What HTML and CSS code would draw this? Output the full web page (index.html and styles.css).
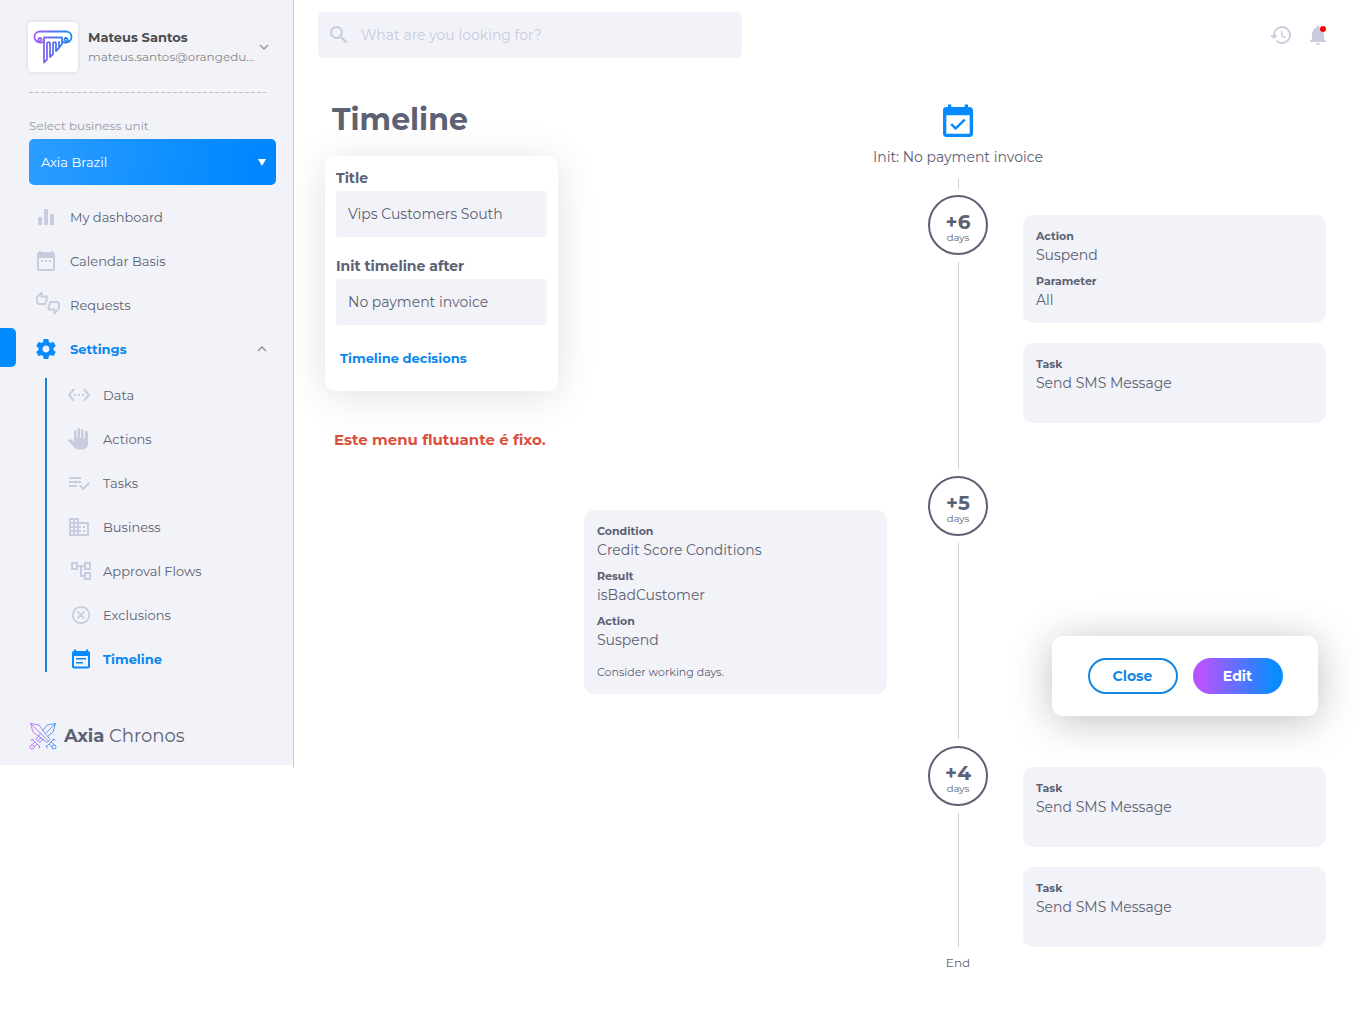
FILE: index.html
```html
<!DOCTYPE html>
<html lang="en">
<head>
<meta charset="utf-8">
<meta name="viewport" content="width=device-width, initial-scale=1">
<title>Axia Chronos – Timeline</title>
<link rel="stylesheet" href="styles.css">
</head>
<body>
<div class="app">
  <aside class="sidebar">
    <div class="sidebar-inner">
      <div class="user">
        <span class="avatar">
          <svg width="40" height="34" viewBox="0 0 40 34" fill="none" stroke="url(#brand)" stroke-width="1.800" stroke-linecap="round" stroke-linejoin="round">
            <defs>
              <linearGradient id="brand" gradientUnits="userSpaceOnUse" x1="0" y1="0" x2="40" y2="0"><stop offset="0" stop-color="#b455f5"/><stop offset="1" stop-color="#0a8cf0"/></linearGradient>
            </defs>
            <path d="M11 9.500C11 12 9 13 7 12.500C3 12 1.500 9 1.500 6.500C1.500 3.500 4 1.500 7 1.500H33C36 1.500 38.500 3.500 38.500 6.500C38.500 9 37 12 33 12.500C31 13 29 12 29 9.500M7.500 12.500C4.500 11 5 8 7 8C8.500 8 9 9.500 8 10.500M32.500 12.500C35.500 11 35 8 33 8C31.500 8 31 9.500 32 10.500M11 7.500H29M11 8V32.500L14 29.500V14C14 11.500 17 11.500 17 14V27L20 24V14C20 11.500 23 11.500 23 14V21L26 18V14M26 12V18L29 14V8"/>
          </svg>
        </span>
        <div class="user-text">
          <strong class="user-name">Mateus Santos</strong>
          <span class="user-mail">mateus.santos@orangedu...</span>
        </div>
        <button class="icon-button" type="button" aria-label="Open account menu">
          <svg width="10" height="6" viewBox="0 0 10 6" fill="none" stroke="#999" stroke-width="1.500"><path d="M1 1l4 4 4-4"/></svg>
        </button>
      </div>
      <svg class="divider" height="1" aria-hidden="true"><line x1="0" y1=".5" x2="100%" y2=".5" stroke="#bfc1cb" stroke-dasharray="4 2"/></svg>

      <div class="unit">
        <label for="unit">Select business unit</label>
        <div class="unit-box">
          <select id="unit"><option>Axia Brazil</option></select>
          <svg width="8" height="7" viewBox="0 0 8 7" fill="#fff" aria-hidden="true"><path d="M0 0h8L4 7z"/></svg>
        </div>
      </div>

      <nav class="nav">
        <a class="nav-item" href="#dashboard"><svg class="icon" viewBox="0 0 24 24"><path d="M4 12h4v8H4zM10 4h4v16h-4zM16 9h4v11h-4z"/></svg>My dashboard</a>
        <a class="nav-item" href="#calendar"><svg class="icon" viewBox="0 0 24 24"><path d="M5 3V2h2v1h10V2h2v1c1.200 0 2 .8 2 2v15c0 1.200-.8 2-2 2H5c-1.200 0-2-.8-2-2V5c0-1.200.8-2 2-2zm0 6v11h14V9zM7 11h2v2H7zm4 0h2v2h-2zm4 0h2v2h-2z"/></svg>Calendar Basis</a>
        <a class="nav-item" href="#requests"><svg class="icon" viewBox="0 0 24 24" overflow="visible"><path transform="translate(1 -2)" fill="none" stroke="#c9cbdf" stroke-width="1.800" d="M2 6L6.500 1.800L7 2.300L6.400 5.500H12V7L10.300 13H3.500L2 11.500zM24 17.500L19.500 22.500L19 21.500L19.500 18.500H13.500V16.500L15.500 11H22.500L24 12.500z"/></svg>Requests</a>
        <a class="nav-item active marked" href="#settings"><svg class="icon" viewBox="0 0 24 24"><path d="M19.430 12.980c.04-.32.07-.64.07-.98s-.03-.66-.07-.98l2.110-1.650c.19-.15.24-.42.12-.64l-2-3.460c-.12-.22-.39-.3-.61-.22l-2.490 1c-.52-.4-1.080-.73-1.690-.98l-.38-2.650A.488.488 0 0 0 14 2h-4c-.25 0-.46.18-.49.42l-.38 2.650c-.61.25-1.170.59-1.690.98l-2.490-1c-.23-.09-.49 0-.61.22l-2 3.460c-.13.22-.07.49.12.64l2.110 1.650c-.04.32-.07.65-.07.98s.03.66.07.98l-2.110 1.650c-.19.15-.24.42-.12.64l2 3.460c.12.22.39.3.61.22l2.490-1c.52.4 1.080.73 1.690.98l.38 2.650c.03.24.24.42.49.42h4c.25 0 .46-.18.49-.42l.38-2.650c.61-.25 1.170-.59 1.690-.98l2.490 1c.23.09.49 0 .61-.22l2-3.460c.12-.22.07-.49-.12-.64zM12 15.500c-1.930 0-3.500-1.570-3.500-3.500s1.570-3.500 3.500-3.500 3.500 1.570 3.500 3.500-1.570 3.500-3.500 3.500z"/></svg>Settings<svg class="caret" width="10" height="6" viewBox="0 0 10 6" fill="none" stroke="#999" stroke-width="1.500"><path d="M1 5l4-4 4 4"/></svg></a>
        <div class="subnav">
          <a class="nav-item" href="#data"><svg class="icon" viewBox="0 0 24 24"><path d="M7.770 6.760L6.230 5.480.82 12l5.410 6.520 1.540-1.280L3.420 12zM7 13h2v-2H7zm10-2h-2v2h2zm-6 2h2v-2h-2zm6.770-7.520l-1.540 1.280L20.580 12l-4.350 5.240 1.540 1.280L23.180 12z"/></svg>Data</a>
          <a class="nav-item" href="#actions"><svg class="icon" viewBox="0 0 24 24"><path d="M21 5.500v11c0 3.500-2.500 6-6 6h-3c-2 0-3.500-.7-4.800-2L1 13.200c1.500-1.300 2.700-1 4-.2l2 1.400V4.500C7 2.700 9.500 2.700 9.500 4.500V11h1V2.500c0-1.900 2.500-1.900 2.500 0V11h1V3.500c0-1.900 2.500-1.900 2.500 0V11h1.500V5.500c0-1.900 3-1.900 3 0z"/></svg>Actions</a>
          <a class="nav-item" href="#tasks"><svg class="icon" viewBox="0 0 24 24"><path d="M2 6h12v2H2zM2 10h12v2H2zM2 14h8v2H2zM13.400 13.600L12 15l4.250 4.250L23 12.500l-1.400-1.400-5.350 5.300z"/></svg>Tasks</a>
          <a class="nav-item" href="#business"><svg class="icon" viewBox="0 0 24 24"><path d="M12 7V3H2v18h20V7zM6 19H4v-2h2zm0-4H4v-2h2zm0-4H4V9h2zm0-4H4V5h2zm4 12H8v-2h2zm0-4H8v-2h2zm0-4H8V9h2zm0-4H8V5h2zm10 12h-8v-2h2v-2h-2v-2h2v-2h-2V9h8zm-2-8h-2v2h2zm0 4h-2v2h2z"/></svg>Business</a>
          <a class="nav-item" href="#flows"><svg class="icon" viewBox="-2 0 24 24"><path d="M22 11V3h-7v3H9V3H2v8h7V8h2v10h4v3h7v-8h-7v3h-2V8h2v3zM7 9H4V5h3zm10 6h3v4h-3zm0-10h3v4h-3z"/></svg>Approval Flows</a>
          <a class="nav-item" href="#exclusions"><svg class="icon" viewBox="-2 0 24 24"><path fill="none" stroke="#c9cbdf" stroke-width="1.700" d="M12 3.800a8.200 8.200 0 1 0 0 16.400 8.200 8.200 0 0 0 0-16.400zM8.500 8.500l7 7m0-7l-7 7"/></svg>Exclusions</a>
          <a class="nav-item active" href="#timeline"><svg class="icon" viewBox="-2 0 24 24"><path d="M5 4V2.500h2V4h10V2.500h2V4c1.200 0 2 .8 2 2v13.500c0 1.200-.8 2-2 2H5c-1.200 0-2-.8-2-2V6c0-1.200.8-2 2-2zm0 5v10.500h14V9zM7 11h10v1.600H7zm0 4h7v1.600H7z"/></svg>Timeline</a>
        </div>
      </nav>

      <div class="brand">
        <svg width="28" height="28" viewBox="0 0 28 28" fill="none" stroke="url(#swords)" stroke-width=".8" stroke-linejoin="round">
          <defs><linearGradient id="swords" gradientUnits="userSpaceOnUse" x1="0" y1="0" x2="28" y2="0"><stop offset="0" stop-color="#c35af5"/><stop offset="1" stop-color="#168cf0"/></linearGradient></defs>
          <path d="M1.500 1.500L10 3L21 17.500L18 20.500L4 10zM1.500 1.500L19 18.500M26.500 1.500L18 3L13.500 9M26.500 1.500L24 10L18.500 14.500M11.500 11.500L7 17.500L10 20.500L15 17M26.500 1.500L17 11M12 16L9 18.500M3 17L11 25M1.500 18.500L3 17L5 18.500M9.500 23L11 25L9.500 26.500M6 20L2.500 23M8 22L5 25.500M25 17L17 25M26.500 18.500L25 17L23 18.500M18.500 23L17 25L18.500 26.500M22 20L25.500 23M20 22L23 25.500"/>
          <circle cx="3" cy="25" r="2"/><circle cx="25" cy="25" r="2"/>
        </svg>
        <span><strong>Axia</strong> Chronos</span>
      </div>
    </div>
  </aside>

  <main class="main">
    <header class="topbar">
      <label class="search">
        <svg class="icon" viewBox="0 0 24 24"><path d="M15.500 14h-.79l-.28-.27A6.471 6.471 0 0 0 16 9.500 6.500 6.500 0 1 0 9.500 16c1.610 0 3.090-.59 4.230-1.570l.27.28v.79l5 4.990L20.490 19zm-6 0C7.010 14 5 11.990 5 9.500S7.010 5 9.500 5 14 7.010 14 9.500 11.990 14 9.500 14z"/></svg>
        <input type="search" placeholder="What are you looking for?" aria-label="Search">
      </label>
      <div class="tools">
        <button class="icon-button" type="button" aria-label="History"><svg class="icon" viewBox="0 0 24 24"><path d="M13 3a9 9 0 0 0-9 9H1l3.890 3.890.07.14L9 12H6c0-3.870 3.130-7 7-7s7 3.130 7 7-3.130 7-7 7c-1.930 0-3.680-.79-4.940-2.060l-1.420 1.420A8.954 8.954 0 0 0 13 21a9 9 0 0 0 0-18zm-1 5v5l4.280 2.540.72-1.210-3.500-2.080V8z"/></svg></button>
        <button class="icon-button bell" type="button" aria-label="Notifications"><svg class="icon" viewBox="0 0 24 24"><path d="M12 22c1.100 0 2-.9 2-2h-4c0 1.100.9 2 2 2zm6-6v-5c0-3.070-1.640-5.640-4.500-6.320V4c0-.83-.67-1.500-1.500-1.500s-1.500.67-1.500 1.500v.68C7.630 5.360 6 7.920 6 11v5l-2 2v1h16v-1z"/></svg></button>
      </div>
    </header>

    <div class="content">
      <section class="panel">
        <h1>Timeline</h1>
        <form class="panel-card">
          <label for="title">Title</label>
          <input id="title" type="text" value="Vips Customers South">
          <label for="init">Init timeline after</label>
          <input id="init" type="text" value="No payment invoice">
          <a href="#decisions">Timeline decisions</a>
        </form>
        <p class="note">Este menu flutuante é fixo.</p>
      </section>

      <section class="timeline">
        <div class="start">
          <svg width="40" height="40" viewBox="0 0 24 24" fill="#068bff"><path d="M16.530 11.060L15.470 10l-4.880 4.880-2.120-2.120-1.060 1.060L10.590 17zM19 3h-1V1.500h-2V3H8V1.500H6V3H5a2 2 0 0 0-2 2v14c0 1.100.9 2 2 2h14c1.100 0 2-.9 2-2V5c0-1.100-.9-2-2-2zm0 16H5V8h14z"/></svg>
          <span>Init: No payment invoice</span>
          <i class="stem"></i>
        </div>

        <div class="step">
          <div class="node"><div class="circle"><strong>+6</strong><span>days</span></div></div>
          <div class="after">
            <dl class="card"><dt>Action</dt><dd>Suspend</dd><dt>Parameter</dt><dd>All</dd></dl>
            <dl class="card"><dt>Task</dt><dd>Send SMS Message</dd></dl>
          </div>
        </div>

        <div class="step">
          <div class="before">
            <div class="card">
              <dl><dt>Condition</dt><dd>Credit Score Conditions</dd><dt>Result</dt><dd>isBadCustomer</dd><dt>Action</dt><dd>Suspend</dd></dl>
              <p>Consider working days.</p>
            </div>
          </div>
          <div class="node"><div class="circle"><strong>+5</strong><span>days</span></div></div>
          <div class="after end">
            <div class="actions">
              <button class="pill outline" type="button">Close</button>
              <button class="pill filled" type="button">Edit</button>
            </div>
          </div>
        </div>

        <div class="step last">
          <div class="node"><div class="circle"><strong>+4</strong><span>days</span></div></div>
          <div class="after">
            <dl class="card"><dt>Task</dt><dd>Send SMS Message</dd></dl>
            <dl class="card"><dt>Task</dt><dd>Send SMS Message</dd></dl>
          </div>
        </div>
        <div class="finish"><span>End</span></div>
      </section>
    </div>
  </main>
</div>
</body>
</html>
```
FILE: styles.css
```css
* { box-sizing: border-box; }

body {
  margin: 0;
  background: #fff;
  color: #5c6173;
  font-family: Montserrat, Inter, "Open Sans", sans-serif;
  font-size: 14px;
  font-weight: 400;
  line-height: 18px;
}

a { text-decoration: none; }
input, select, button { font: inherit; color: inherit; border: 0; }
svg { flex: none; }
strong { font-weight: 700; }
dl, dd, p, h1 { margin: 0; }

.icon { width: 24px; height: 24px; fill: #c9cbdf; }
.icon-button { display: flex; padding: 0; background: none; }

.app { display: flex; align-items: flex-start; min-height: 100vh; }

/* Sidebar */
.sidebar {
  flex: none;
  width: 294px;
  padding-bottom: 3px;
  border-right: 1px solid #c8cad6;
}
.sidebar-inner { padding: 22px 0 13px; background: #f2f3f8; }

.user { display: flex; align-items: center; gap: 10px; padding: 0 24px 0 28px; }
.avatar {
  display: grid;
  place-items: center;
  flex: none;
  width: 50px;
  height: 50px;
  border-radius: 4px;
  background: #fff;
  box-shadow: 0 0 4px rgba(0, 0, 0, .12);
}
.user-text { display: flex; flex: 1; flex-direction: column; gap: 2px; min-width: 0; white-space: nowrap; }
.user-name { color: #4d4d4d; font-size: 13px; }
.user-mail { color: #858585; font-size: 12px; }
.divider { display: block; width: 237px; margin: 20px 0 24px 29px; }

.unit { display: flex; flex-direction: column; gap: 4px; padding: 0 17px 0 29px; }
.unit label { color: #9799a6; font-size: 12px; }
.unit-box { display: grid; align-items: center; }
.unit-box > * { grid-area: 1 / 1; }
.unit-box svg { justify-self: end; margin-right: 10px; pointer-events: none; }
.unit select {
  width: 100%;
  height: 46px;
  padding: 0 12px;
  appearance: none;
  border-radius: 5px;
  background: linear-gradient(100deg, #2c9dff, #0087ff 90%);
  color: #fff;
  font-size: 13px;
}

.nav { margin-top: 10px; }
.nav-item {
  display: flex;
  align-items: center;
  gap: 12px;
  height: 44px;
  padding: 0 26px 0 34px;
  color: #5c6173;
  font-size: 13px;
}
.active { color: #0a88f0; font-weight: 700; }
.active .icon { fill: #068bff; }
.caret { margin-left: auto; }
.marked { position: relative; }
.marked::before {
  position: absolute;
  top: 1px;
  left: 0;
  width: 16px;
  height: 39px;
  border-radius: 0 5px 5px 0;
  background: #008cff;
  content: "";
}
.subnav { position: relative; padding-top: 2px; }
.subnav::before {
  position: absolute;
  top: 7px;
  bottom: 9px;
  left: 45px;
  width: 2px;
  background: #1a82d2;
  content: "";
}
.subnav .nav-item { padding-left: 67px; }

.brand {
  display: flex;
  align-items: center;
  gap: 7px;
  height: 32px;
  margin-top: 39px;
  padding-left: 29px;
  font-size: 18px;
}

/* Main area */
.main { flex: 1; min-width: 0; padding: 12px 40px 48px 24px; }
.topbar { display: flex; align-items: center; justify-content: space-between; gap: 24px; }
.search {
  display: flex;
  align-items: center;
  gap: 10px;
  width: 424px;
  height: 46px;
  padding: 0 9px;
  border-radius: 5px;
  background: #f2f3f8;
}
.search input { flex: 1; min-width: 0; padding: 0; background: none; outline: 0; }
.search input::placeholder { color: #c9cbdf; opacity: 1; }
.tools { display: flex; gap: 13px; margin-right: -4px; }
.bell { position: relative; }
.bell::after {
  position: absolute;
  top: 3px;
  right: 4px;
  width: 6px;
  height: 6px;
  border-radius: 50%;
  background: #f00;
  content: "";
}

.content { display: flex; align-items: flex-start; gap: 26px; padding: 42px 0 0 7px; }

.panel { flex: none; width: 233px; }
.panel h1 { padding-left: 7px; font-size: 30px; font-weight: 700; line-height: 40px; }
.panel-card {
  display: flex;
  flex-direction: column;
  margin-top: 16px;
  padding: 13px 11px 24px;
  border-radius: 10px;
  background: #fff;
  box-shadow: 0 5px 40px rgba(0, 0, 0, .12);
}
.panel-card label { margin-bottom: 4px; font-weight: 700; }
.panel-card input {
  height: 46px;
  margin-bottom: 20px;
  padding: 0 12px;
  border-radius: 4px;
  background: #f2f3f8;
}
.panel-card a { margin-top: 4px; padding-left: 4px; color: #0a88f0; font-size: 13px; font-weight: 700; }
.note { margin-top: 40px; padding-left: 9px; color: #db4f3d; font-size: 15px; font-weight: 700; }

/* Timeline */
.timeline { flex: 1; min-width: 0; }
.start, .step, .finish { display: grid; grid-template-columns: minmax(0, 1fr) 60px 338px; }
.start, .finish { justify-items: center; white-space: nowrap; }
.start > *, .finish > * { grid-column: 2; }
.start { padding: 2px 0 6px; }
.start span { margin-top: 6px; }
.stem { width: 1px; height: 11px; margin-top: 12px; background: #cdd0d6; }

.node { display: flex; grid-column: 2; grid-row: 1; flex-direction: column; align-items: center; gap: 7px; }
.node::after { flex: 1; width: 1px; margin-bottom: 7px; background: #cdd0d6; content: ""; }
.circle {
  display: flex;
  flex-direction: column;
  align-items: center;
  justify-content: center;
  width: 60px;
  height: 60px;
  padding-top: 6px;
  border: 2px solid #5c6173;
  border-radius: 50%;
}
.circle strong { font-size: 20px; line-height: 20px; }
.circle span { font-size: 10px; line-height: 12px; }

.before, .after { display: flex; flex-direction: column; gap: 20px; grid-row: 1; }
.before { grid-column: 1; padding: 34px 41px 52px 0; }
.after { grid-column: 3; padding: 20px 0 53px 35px; }
.last .after { padding: 21px 0 0 35px; }
.last .node::after { margin-bottom: 0; }
.end { align-items: flex-end; justify-content: flex-end; padding: 0 8px 30px 0; }

.card { min-height: 80px; padding: 12px 13px 13px; border-radius: 10px; background: #f2f3f8; }
.card dt { font-size: 11px; font-weight: 700; }
.card dd { line-height: 20px; margin-bottom: 7px; }
.card dd:last-child { margin-bottom: 0; }
.card p { margin-top: 13px; font-size: 11px; }

.actions {
  display: flex;
  align-items: center;
  justify-content: center;
  gap: 15px;
  width: 266px;
  height: 80px;
  border-radius: 10px;
  background: #fff;
  box-shadow: 0 5px 40px rgba(0, 0, 0, .25);
}
.pill { width: 90px; height: 36px; padding: 0; border-radius: 18px; font-weight: 700; }
.outline { border: 2px solid #1488e0; background: #fff; color: #1488e0; }
.filled { background: linear-gradient(90deg, #b455ff 10%, #0a8cff 90%); color: #fff; }

.finish { margin-top: 7px; font-size: 12px; }
```
